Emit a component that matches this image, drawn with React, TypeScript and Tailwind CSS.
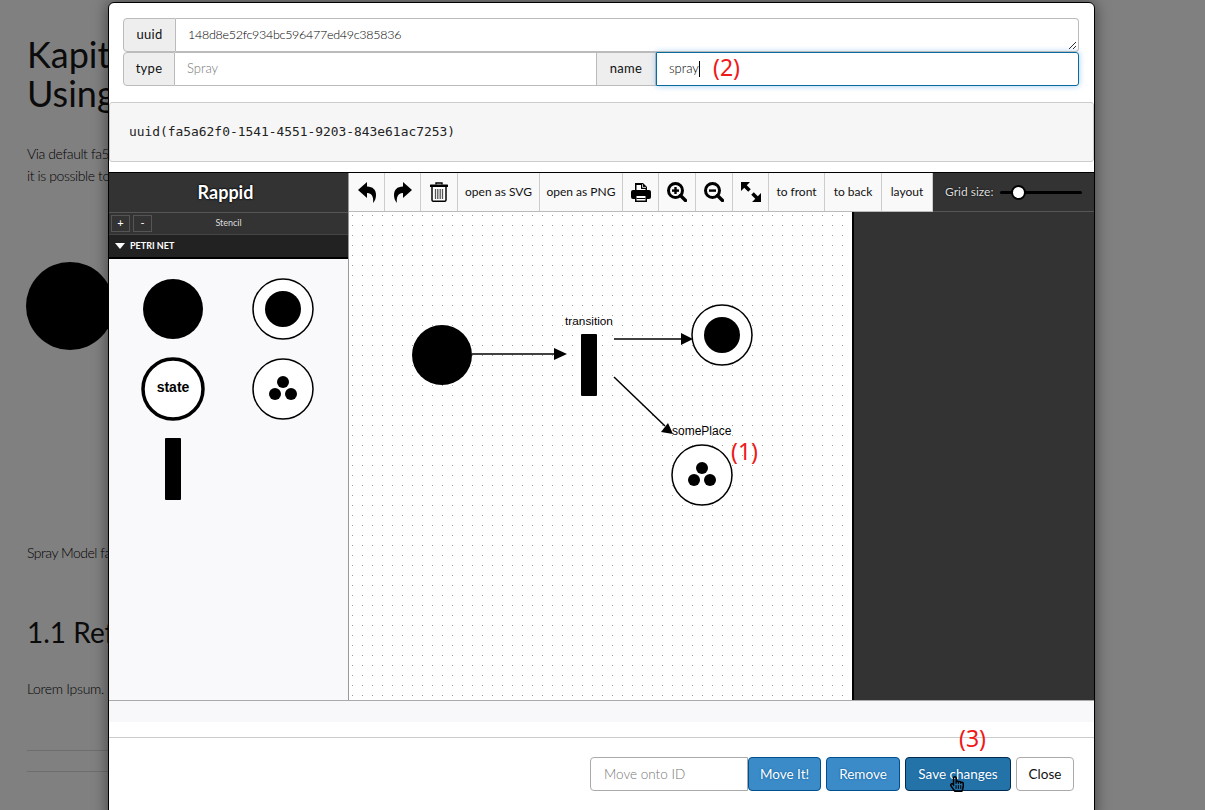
import React from 'react';
import { FaRegHandPointer } from 'react-icons/fa';

const ToolIcon: React.FC<{ w: string; children: React.ReactNode }> = ({ w, children }) => (
  <div className={`${w} h-full flex items-center justify-center border-r border-[#ccc]`}>{children}</div>
);

const ToolText: React.FC<{ w: string; label: string }> = ({ w, label }) => (
  <div className={`${w} h-full flex items-center justify-center border-r border-[#ccc] text-[12px] text-[#111]`}>{label}</div>
);

const UndoIcon: React.FC<{ flip?: boolean }> = ({ flip }) => (
  <svg width="18" height="21" viewBox="0 0 18 21" className={flip ? '-scale-x-100' : ''}>
    <path d="M0 8 L9 0 V4.5 C15 4.5 18 8 18 13 C18 16 17 19 15 21 C15.6 17 15 11 9 11 V16 Z" fill="#000" />
  </svg>
);

const TrashIcon = () => (
  <svg width="18" height="20" viewBox="0 0 18 20">
    <path d="M6 2.5 V1 H12 V2.5" fill="none" stroke="#000" strokeWidth="1.4" />
    <rect x="0" y="2.5" width="18" height="2.5" rx="0.6" fill="#000" />
    <path d="M2 5 V18 Q2 19.3 3.5 19.3 H14.5 Q16 19.3 16 18 V5" fill="#fff" stroke="#000" strokeWidth="1.5" />
    <path d="M5.5 7 V17 M7.8 7 V17 M10.2 7 V17 M12.5 7 V17" stroke="#555" strokeWidth="1.3" />
  </svg>
);

const PrintIcon = () => (
  <svg width="20" height="19" viewBox="0 0 20 19">
    <path d="M4 0 H12 L16 4 V8 H4 Z" fill="#000" />
    <path d="M11.5 1.2 V4.4 H15" fill="none" stroke="#fff" strokeWidth="0.8" />
    <path d="M5.5 2 H10 V6 H14.5 V7 H5.5 Z" fill="#fff" />
    <rect x="0" y="7" width="20" height="9" rx="2" fill="#000" />
    <rect x="4" y="11.5" width="12" height="7.5" fill="#000" />
    <rect x="5.5" y="13" width="9" height="4.5" fill="#fff" />
    <rect x="5.5" y="15" width="9" height="1" fill="#000" />
  </svg>
);

const ZoomIcon: React.FC<{ plus?: boolean }> = ({ plus }) => (
  <svg width="20" height="20" viewBox="0 0 20 20">
    <circle cx="8.5" cy="8.5" r="7" fill="none" stroke="#000" strokeWidth="3" />
    <path d="M13.5 13.5 L18.5 18.5" stroke="#000" strokeWidth="3.4" strokeLinecap="round" />
    <rect x="5" y="7.4" width="7" height="2.4" fill="#000" />
    {plus && <rect x="7.3" y="5" width="2.4" height="7" fill="#000" />}
  </svg>
);

const ExpandIcon = () => (
  <svg width="20" height="20" viewBox="0 0 20 20">
    <path d="M0 0 H9 L0 9 Z M20 20 H11 L20 11 Z" fill="#000" />
    <path d="M3 3 L8.5 8.5 M17 17 L11.5 11.5" stroke="#000" strokeWidth="3.6" />
  </svg>
);

const Tokens: React.FC<{ x: number; y: number }> = ({ x, y }) => (
  <g>
    <circle cx={x} cy={y} r="30" fill="#fff" stroke="#000" strokeWidth="1.5" />
    <circle cx={x} cy={y - 7} r="6" fill="#000" />
    <circle cx={x - 8} cy={y + 5} r="6" fill="#000" />
    <circle cx={x + 8} cy={y + 5} r="6" fill="#000" />
  </g>
);

const Ring: React.FC<{ x: number; y: number }> = ({ x, y }) => (
  <g>
    <circle cx={x} cy={y} r="30" fill="#fff" stroke="#000" strokeWidth="1.5" />
    <circle cx={x} cy={y} r="18" fill="#000" />
  </g>
);

const StencilShapes = () => (
  <svg className="block w-full h-full" viewBox="109 259 239 441">
    <circle cx="173" cy="309" r="30" fill="#000" />
    <Ring x={283} y={309} />
    <circle cx="173" cy="389" r="30" fill="#fff" stroke="#000" strokeWidth="3.5" />
    <text x="173" y="391.5" textAnchor="middle" fontSize="14" fontWeight="700" fill="#000" fontFamily="Liberation Sans">state</text>
    <Tokens x={283} y={389} />
    <rect x="165" y="438" width="16" height="62" rx="1" fill="#000" />
  </svg>
);

const PaperDiagram = () => (
  <svg className="block w-full h-full" viewBox="349 212 503 488">
    <defs>
      <pattern id="dots" x="352" y="215" width="10" height="10" patternUnits="userSpaceOnUse">
        <rect width="1" height="1" fill="#999" />
      </pattern>
    </defs>
    <rect x="349" y="212" width="503" height="488" fill="url(#dots)" />
    <circle cx="442" cy="355" r="30" fill="#000" />
    <line x1="472" y1="354" x2="556" y2="354" stroke="#000" strokeWidth="1.5" />
    <path d="M554 348 L567 354 L554 360 Z" fill="#000" />
    <rect x="581" y="334" width="16" height="62" rx="1" fill="#000" />
    <text x="589" y="325" textAnchor="middle" fontSize="11.8" fill="#000" fontFamily="Liberation Sans">transition</text>
    <line x1="614" y1="339" x2="682" y2="339" stroke="#000" strokeWidth="1.5" />
    <path d="M681 333 L693 339 L681 345 Z" fill="#000" />
    <Ring x={722} y={335} />
    <line x1="614" y1="377" x2="665" y2="426" stroke="#000" strokeWidth="1.5" />
    <path d="M661 432 L668 423 L673 434 Z" fill="#000" />
    <text x="672" y="435" fontSize="12" fill="#000" fontFamily="Liberation Sans">somePlace</text>
    <Tokens x={702} y={475} />
  </svg>
);

const App: React.FC = () => {
  return (
    <div className='relative w-[1205px] h-[810px] overflow-hidden bg-[#808080] text-[#111] font-["Lato",sans-serif]'>
      {/* page behind the dialog, cut off by the dialog's left edge */}
      <div className="pl-[27px] pt-[35px] w-[108px] h-[810px] overflow-hidden whitespace-nowrap">
        <h1 className="text-[36px] leading-[39px] text-[#0b0b0b]">Kapitel<br />Using</h1>
        <p className="mt-[30px] text-[14px] leading-[22px] font-light tracking-[-0.4px] text-black">Via default fa5<br />it is possible to</p>
        <div className="mt-[75px] -ml-px w-[88px] h-[88px] rounded-full bg-black" />
        <p className="mt-[193px] text-[14px] leading-[20px] font-light tracking-[-0.5px] text-black">Spray Model fa</p>
        <h2 className="mt-[52px] text-[28px] leading-[34px] text-[#0b0b0b]">1.1 Ref</h2>
        <p className="mt-[30px] text-[14px] leading-[20px] font-light tracking-[-0.3px] text-black">Lorem Ipsum.</p>
        <div className="mt-[51px] h-px bg-[#6e6e6e]" />
        <div className="mt-[20px] h-px bg-[#6e6e6e]" />
      </div>

      {/* dialog */}
      <div className="absolute left-[108px] top-[2px] w-[987px] h-[820px] bg-white border border-black rounded-[6px] shadow-[0_0_15px_rgba(0,0,0,0.5)] overflow-hidden">
        <div className="pl-[14px] pr-[15px] pt-[15px]">
          <div className="flex h-[34px]">
            <div className="w-[53px] flex items-center justify-center bg-[#eee] border border-[#bbb] rounded-l-[4px] text-[13px] tracking-[0.3px]">uuid</div>
            <div className="relative flex-1 flex items-center pl-[12px] border border-l-0 border-[#bbb] rounded-r-[4px] text-[12.5px] tracking-[-0.28px] font-light text-black">
              148d8e52fc934bc596477ed49c385836
              <svg className="absolute right-px bottom-px" width="9" height="9" viewBox="0 0 9 9">
                <path d="M1 8 L8 1 M5 8 L8 5" stroke="#333" strokeWidth="1" />
              </svg>
            </div>
          </div>
          <div className="flex h-[34px]">
            <div className="w-[52px] flex items-center justify-center bg-[#eee] border border-[#bbb] rounded-l-[4px] text-[13px] tracking-[0.3px]">type</div>
            <div className="w-[421px] flex items-center pl-[12px] border-y border-[#bbb] text-[13px] font-light text-[#777]">Spray</div>
            <div className="w-[60px] flex items-center justify-center bg-[#eee] border border-[#bbb] text-[13px] tracking-[0.3px]">name</div>
            <div className="flex-1 flex items-center pl-[12px] border border-[#0b6a9c] rounded-r-[3px] shadow-[0_0_6px_rgba(102,175,233,0.6)] text-[13px] font-light text-black">
              spray<span className="w-px h-[16px] bg-black" />
            </div>
          </div>
        </div>

        <pre className="mt-[16px] h-[60px] flex items-center pl-[19px] bg-[#f6f6f6] border border-[#ccc] rounded-[3px] font-['DejaVu_Sans_Mono',monospace] text-[12.9px] text-[#222]">uuid(fa5a62f0-1541-4551-9203-843e61ac7253)</pre>

        {/* rappid editor */}
        <div className="mt-[10px] h-[529px] flex border-y border-t-black border-b-[#aaa]">
          <div className="w-[240px] flex flex-col border-r border-[#999]">
            <div className="h-[39px] flex items-center justify-center pr-[6px] bg-[#333] text-white text-[18px] font-bold [text-shadow:0_0_2px_#000,0_0_2px_#000]">Rappid</div>
            <div className="relative h-[22px] flex items-center gap-[3px] pl-[2px] bg-[#333] border-t border-[#555]">
              <div className="w-[19px] h-[17px] flex items-center justify-center border border-[#555] text-[11px] text-white">+</div>
              <div className="w-[19px] h-[17px] flex items-center justify-center border border-[#555] text-[11px] text-white">-</div>
              <span className="absolute left-0 right-0 top-[3px] text-center text-[9px] text-[#ddd] pointer-events-none">Stencil</span>
            </div>
            <div className="h-[25px] flex items-center gap-[5px] pl-[6px] bg-[#222] border-t border-[#444] border-b-2 border-b-black">
              <span className="w-0 h-0 border-x-[5px] border-x-transparent border-t-[6px] border-t-white" />
              <span className="text-[9px] font-bold text-white">PETRI NET</span>
            </div>
            <div className="flex-1 min-h-0 bg-[#f9f9fb]">
              <StencilShapes />
            </div>
          </div>

          <div className="flex-1 flex flex-col min-w-0">
            <div className="h-[39px] flex">
              <div className="w-[584px] h-full flex bg-[#f9f9f9] border-b border-[#bbb]">
                <ToolIcon w="w-[36px]"><UndoIcon /></ToolIcon>
                <ToolIcon w="w-[36px]"><UndoIcon flip /></ToolIcon>
                <ToolIcon w="w-[37px]"><TrashIcon /></ToolIcon>
                <ToolText w="w-[82px]" label="open as SVG" />
                <ToolText w="w-[83px]" label="open as PNG" />
                <ToolIcon w="w-[36px]"><PrintIcon /></ToolIcon>
                <ToolIcon w="w-[37px]"><ZoomIcon plus /></ToolIcon>
                <ToolIcon w="w-[37px]"><ZoomIcon /></ToolIcon>
                <ToolIcon w="w-[36px]"><ExpandIcon /></ToolIcon>
                <ToolText w="w-[56px]" label="to front" />
                <ToolText w="w-[57px]" label="to back" />
                <ToolText w="w-[51px]" label="layout" />
              </div>
              <div className="flex-1 flex items-center pl-[12px] gap-[5px] bg-[#333] border-b border-[#555]">
                <span className="w-[50px] whitespace-nowrap text-[12px] text-[#ddd] [text-shadow:0_0_2px_#000]">Grid size:</span>
                <div className="relative w-[82px] h-[3px] rounded-full bg-black">
                  <span className="absolute left-[11px] -top-[6px] w-[15px] h-[15px] rounded-full bg-white border-2 border-black" />
                </div>
              </div>
            </div>
            <div className="flex-1 min-h-0 flex">
              <div className="w-[503px] bg-white">
                <PaperDiagram />
              </div>
              <div className="flex-1 bg-[#333] border-l-2 border-black" />
            </div>
          </div>
        </div>

        <div className="h-[21px] bg-[#f8f8fa]" />
        <div className="mt-[15px] border-t border-[#ccc] pt-[19px] pr-[20px] flex justify-end text-[13.5px]">
          <div className="w-[158px] h-[34px] flex items-center pl-[13px] border border-[#aaa] rounded-l-[4px] font-light text-[#777]">Move onto ID</div>
          <div className="w-[73px] h-[34px] flex items-center justify-center bg-[#3a8bc8] border border-[#00508f] rounded-[4px] text-white [text-shadow:0_0_2px_#00508f]">Move It!</div>
          <div className="ml-[5px] w-[74px] h-[34px] flex items-center justify-center bg-[#3a8bc8] border border-[#00508f] rounded-[4px] text-white [text-shadow:0_0_2px_#00508f]">Remove</div>
          <div className="ml-[5px] w-[106px] h-[34px] flex items-center justify-center bg-[#2473a8] border border-[#002a4f] rounded-[4px] text-white [text-shadow:0_0_2px_#00508f]">Save changes</div>
          <div className="ml-[5px] w-[58px] h-[34px] flex items-center justify-center bg-white border border-[#aaa] rounded-[4px] text-[#111]">Close</div>
        </div>
      </div>

      {/* red annotations */}
      <span className='absolute left-[713px] top-[51px] font-["Noto_Sans",sans-serif] text-[23px] leading-[32px] text-[#f01818]'>(2)</span>
      <span className='absolute left-[731px] top-[435px] font-["Noto_Sans",sans-serif] text-[23px] leading-[32px] text-[#f01818]'>(1)</span>
      <span className='absolute left-[959px] top-[722px] font-["Noto_Sans",sans-serif] text-[23px] leading-[32px] text-[#f01818]'>(3)</span>
      <FaRegHandPointer className="absolute left-[949px] top-[776px] text-[16px] text-black" />
    </div>
  );
};

export default App;
